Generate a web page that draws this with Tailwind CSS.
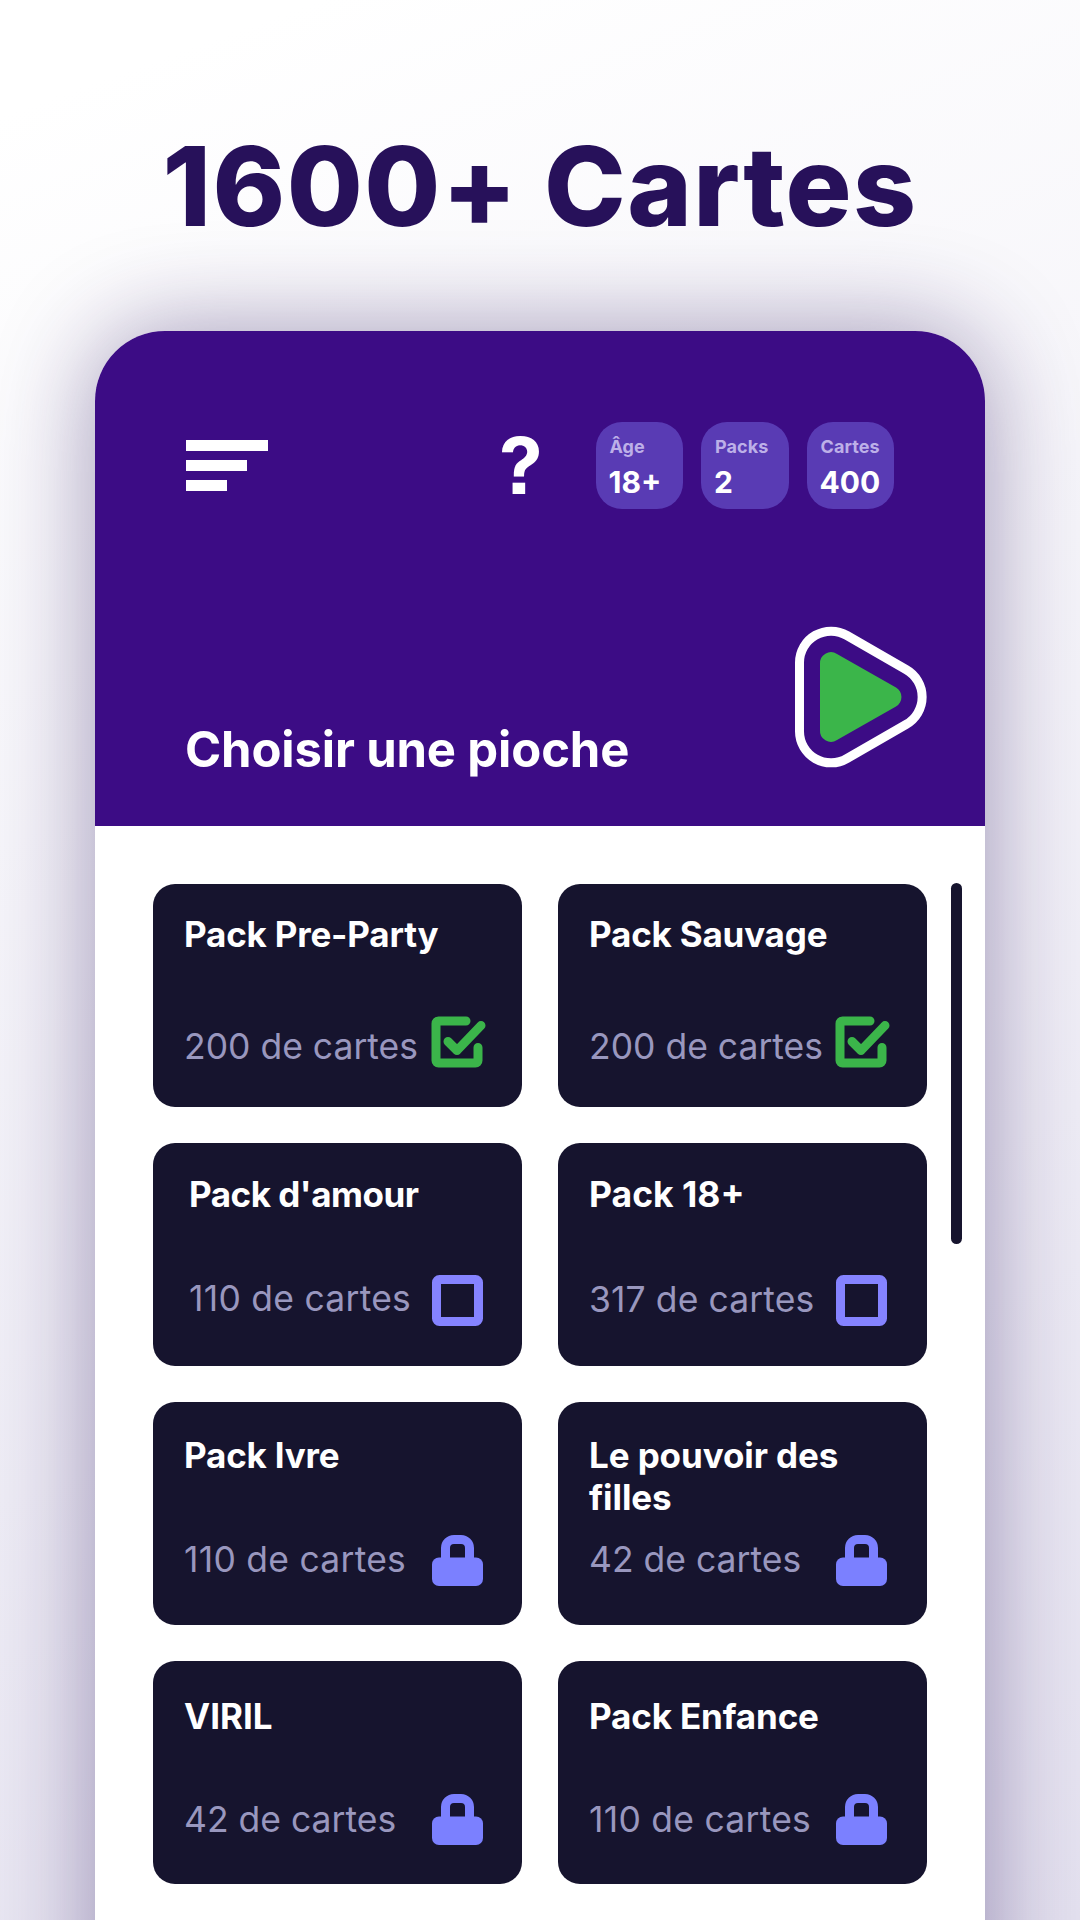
<!DOCTYPE html>
<html lang="fr">

<head>
  <meta charset="UTF-8">
  <meta name="viewport" content="width=device-width, initial-scale=1.0">
  <title>1600+ Cartes</title>
  <script src="https://cdn.jsdelivr.net/npm/@tailwindcss/browser@4"></script>
</head>

<body class="font-['Inter',sans-serif]">
  <!-- Shared icons -->
  <svg class="hidden">
    <symbol id="checked" viewBox="0 0 56 52">
      <path d="M35 5H7.500a2.500 2.500 0 0 0-2.500 2.500v37a2.500 2.500 0 0 0 2.500 2.500h37a2.500 2.500 0 0 0 2.500-2.500V31.500M17 25.500l9 9L50 9.500" fill="none" stroke="#3bb54a" stroke-width="9" stroke-linecap="round" stroke-linejoin="round" />
    </symbol>
    <symbol id="unchecked" viewBox="0 0 56 52">
      <rect x="5.500" y="4.500" width="42" height="42" rx="3" fill="none" stroke="#8583ff" stroke-width="9" />
    </symbol>
    <symbol id="lock" viewBox="0 0 56 52">
      <rect x="1" y="23.500" width="51" height="28.500" rx="7" fill="#7b80ff" />
      <path d="M14.500 28V14a8.500 8.500 0 0 1 8.500-8.500h7a8.500 8.500 0 0 1 8.500 8.500V28" fill="none" stroke="#7b80ff" stroke-width="9" />
    </symbol>
  </svg>

  <div class="flex h-[1920px] w-[1080px] flex-col items-center overflow-hidden bg-linear-160 from-white from-5% to-[#e4e1ef]">
    <h1 class="mt-[119px] h-[212px] shrink-0 text-[110px] leading-[135px] font-extrabold tracking-[1.4px] whitespace-nowrap text-[#27115a]">1600+ Cartes</h1>

    <div class="h-[1740px] w-[890px] shrink-0 rounded-t-[70px] bg-white shadow-[0_0_100px_rgba(39,17,90,0.42)]">
      <header class="flex h-[495px] flex-col rounded-t-[70px] bg-[#3c0c85] px-[91px] pt-[91px]">
        <div class="flex h-[87px] items-center">
          <div class="flex flex-col gap-[9px]">
            <div class="h-[11px] w-[82px] bg-white"></div>
            <div class="h-[11px] w-[61px] bg-white"></div>
            <div class="h-[11px] w-[41px] bg-white"></div>
          </div>
          <div class="ml-[231px] w-[97px] text-[78px] leading-[91px] font-bold text-white [font-feature-settings:'ss07']">?</div>
          <div class="flex gap-[18px] font-bold text-white">
            <div class="h-[87px] w-[87.500px] rounded-[26px] bg-[#593bb4] pt-[14px] pl-[13px]">
              <p class="pl-px text-[18px] leading-[22px] text-[#bdb0e8]">Âge</p>
              <p class="mt-[6px] text-[30px] leading-[36px]">18+</p>
            </div>
            <div class="h-[87px] w-[87.500px] rounded-[26px] bg-[#593bb4] pt-[14px] pl-[13px]">
              <p class="pl-px text-[18px] leading-[22px] tracking-[0.1px] text-[#bdb0e8]">Packs</p>
              <p class="mt-[6px] text-[30px] leading-[36px]">2</p>
            </div>
            <div class="h-[87px] w-[87.500px] rounded-[26px] bg-[#593bb4] pt-[14px] pl-[13px]">
              <p class="pl-px text-[18px] leading-[22px] tracking-[0.1px] text-[#bdb0e8]">Cartes</p>
              <p class="mt-[6px] text-[30px] leading-[36px]">400</p>
            </div>
          </div>
        </div>
        <div class="-mr-[35px] mt-[117px] flex justify-between">
          <h2 class="-ml-px mt-[94px] text-[49px] leading-[60px] font-bold tracking-[-0.15px] whitespace-nowrap text-white">Choisir une pioche</h2>
          <svg class="h-[144px] w-[136px]" viewBox="0 0 136 144">
            <path d="M6.500 36.500A31.500 31.500 0 0 1 54 9.500L113 43.500A31.500 31.500 0 0 1 113 98.500L54 132.500A31.500 31.500 0 0 1 6.500 105.500Z" fill="none" stroke="#fff" stroke-width="9" />
            <path d="M27 38A11 11 0 0 1 44 28L103 61.500A11 11 0 0 1 103 80.500L44 114A11 11 0 0 1 27 104Z" fill="#3bb54a" />
          </svg>
        </div>
      </header>

      <main class="flex pt-[58px] pl-[58px]">
        <div class="grid grid-cols-[369px_369px] gap-9 text-[35.500px] leading-[42px] text-[#9997be]">
          <div class="flex h-[223px] flex-col rounded-[22px] bg-[#16142e] pt-[29px] pl-[31px]">
            <h3 class="h-[103px] text-[35px] font-bold tracking-[-0.2px] text-white">Pack Pre-Party</h3>
            <div class="flex justify-between pr-[35px]">
              <p class="mt-[10px] whitespace-nowrap">200 de cartes</p>
              <svg class="-ml-4 h-[52px] w-[56px] shrink-0"><use href="#checked" /></svg>
            </div>
          </div>
          <div class="flex h-[223px] flex-col rounded-[22px] bg-[#16142e] pt-[29px] pl-[31px]">
            <h3 class="h-[103px] text-[35px] font-bold tracking-[-0.2px] text-white">Pack Sauvage</h3>
            <div class="flex justify-between pr-[36px]">
              <p class="mt-[10px] whitespace-nowrap">200 de cartes</p>
              <svg class="-ml-4 h-[52px] w-[56px] shrink-0"><use href="#checked" /></svg>
            </div>
          </div>
          <div class="flex h-[223px] flex-col rounded-[22px] bg-[#16142e] pt-[30px] pl-[36px]">
            <h3 class="h-[102px] text-[35px] font-bold tracking-[-0.5px] text-white">Pack d'amour</h3>
            <div class="flex justify-between pr-[35px]">
              <p class="mt-[3px] tracking-[0.25px] whitespace-nowrap">110 de cartes</p>
              <svg class="-ml-4 h-[52px] w-[56px] shrink-0"><use href="#unchecked" /></svg>
            </div>
          </div>
          <div class="flex h-[223px] flex-col rounded-[22px] bg-[#16142e] pt-[31px] pl-[31px]">
            <h3 class="h-[101px] font-bold text-white">Pack 18+</h3>
            <div class="flex justify-between pr-[36px]">
              <p class="mt-[4px] tracking-[0.1px] whitespace-nowrap">317 de cartes</p>
              <svg class="-ml-4 h-[52px] w-[56px] shrink-0"><use href="#unchecked" /></svg>
            </div>
          </div>
          <div class="flex h-[223px] flex-col rounded-[22px] bg-[#16142e] pt-[32px] pl-[31px]">
            <h3 class="h-[100px] text-[35px] font-bold tracking-[-0.2px] text-white">Pack Ivre</h3>
            <div class="flex justify-between pr-[35px]">
              <p class="mt-[5px] tracking-[0.25px] whitespace-nowrap">110 de cartes</p>
              <svg class="-ml-4 h-[52px] w-[56px] shrink-0"><use href="#lock" /></svg>
            </div>
          </div>
          <div class="flex h-[223px] flex-col rounded-[22px] bg-[#16142e] pt-[32px] pl-[31px]">
            <h3 class="h-[100px] text-[35px] font-bold tracking-[-0.1px] text-white">Le pouvoir des<br>filles</h3>
            <div class="flex justify-between pr-[36px]">
              <p class="mt-[5px] whitespace-nowrap">42 de cartes</p>
              <svg class="-ml-4 h-[52px] w-[56px] shrink-0"><use href="#lock" /></svg>
            </div>
          </div>
          <div class="flex h-[223px] flex-col rounded-[22px] bg-[#16142e] pt-[34px] pl-[31px]">
            <h3 class="h-[98px] text-[35px] font-bold text-white">VIRIL</h3>
            <div class="flex justify-between pr-[35px]">
              <p class="mt-[6px] whitespace-nowrap">42 de cartes</p>
              <svg class="-ml-4 h-[52px] w-[56px] shrink-0"><use href="#lock" /></svg>
            </div>
          </div>
          <div class="flex h-[223px] flex-col rounded-[22px] bg-[#16142e] pt-[34px] pl-[31px]">
            <h3 class="h-[98px] text-[35px] font-bold tracking-[-0.15px] text-white">Pack Enfance</h3>
            <div class="flex justify-between pr-[36px]">
              <p class="mt-[6px] tracking-[0.25px] whitespace-nowrap">110 de cartes</p>
              <svg class="-ml-4 h-[52px] w-[56px] shrink-0"><use href="#lock" /></svg>
            </div>
          </div>
        </div>
        <!-- Scrollbar -->
        <div class="-mt-px ml-6 h-[361px] w-[11px] rounded-full bg-[#16142e]"></div>
      </main>
    </div>
  </div>
</body>

</html>
